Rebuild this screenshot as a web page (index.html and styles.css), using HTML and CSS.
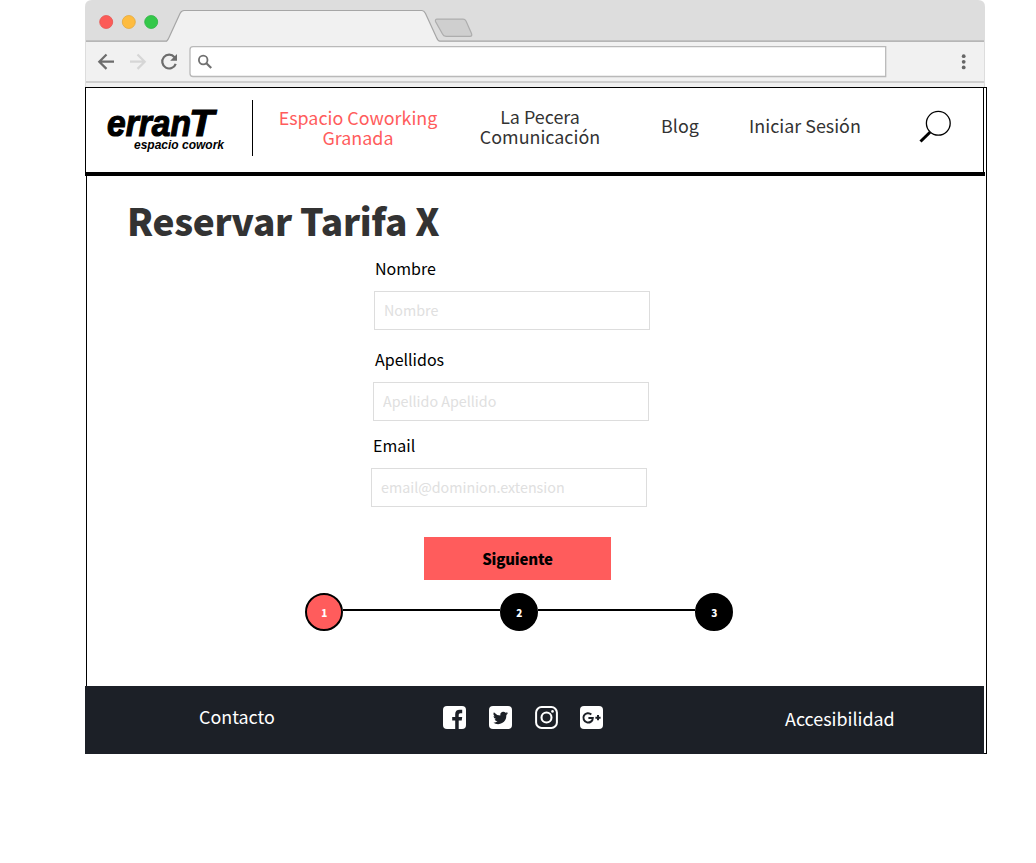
FILE: index.html
```html
<!DOCTYPE html>
<html lang="es">
<head>
<meta charset="utf-8">
<title>Reservar Tarifa X</title>
<link rel="stylesheet" href="styles.css">
</head>
<body>
<div class="window">
  <svg class="chrome" width="900" height="87" viewBox="0 0 900 87">
    <path d="M0 87V7Q0 0 7 0H893Q900 0 900 7V87Z" fill="#ddd"/>
    <path d="M1 41.500H82L96.500 10.500H339L353.500 41.500H899V87H1Z" fill="#f1f1f1"/>
    <path d="M1 41.200H81.500Q83 40 84 37.500L95 13.500Q96.500 10.500 99 10.500H337Q339 10.500 340.500 13.500L351.500 37.500Q353 41.200 355 41.200H899" fill="none" stroke="#a6a6a6" stroke-width="1.200"/>
    <path d="M352 19.200H378Q380 19.200 381 21L386.500 33.500Q387.500 36.300 385 36.300H361Q358.500 36.300 357.500 34L350.500 21.500Q350 19.200 352 19.200Z" fill="#cfcfcf" stroke="#adadad" stroke-width="1.200"/>
    <circle cx="21.200" cy="22" r="6.500" fill="#fc5b57" stroke="#e65450" stroke-width=".8"/>
    <circle cx="43.800" cy="22" r="6.500" fill="#febc40" stroke="#e3a83b" stroke-width=".8"/>
    <circle cx="66.200" cy="22" r="6.500" fill="#34c84a" stroke="#2fb344" stroke-width=".8"/>
    <g fill="none" stroke-width="2.200">
      <path d="M29 61.700H14.500M21.500 54.500L14.300 61.700L21.500 68.900" stroke="#6c6c6c"/>
      <path d="M45 61.700H59.500M52.500 54.500L59.700 61.700L52.500 68.900" stroke="#d6d6d6"/>
      <path d="M89.500 57.200A6.900 6.900 0 1 0 90.700 63.800" stroke="#6c6c6c"/>
    </g>
    <path d="M92 54V60.800H85.200Z" fill="#6c6c6c"/>
    <path d="M108 46.700H800.700V76.500H108Q105 76.500 105 73.500V49.700Q105 46.700 108 46.700Z" fill="#fff" stroke="#b9b9b9" stroke-width="1.300"/>
    <g fill="none" stroke="#707070"><circle cx="118.200" cy="60" r="4.300" stroke-width="1.800"/><path d="M121.400 63.200L126.200 68" stroke-width="2.200"/></g>
    <g fill="#666"><circle cx="878.700" cy="56.200" r="1.900"/><circle cx="878.700" cy="61.800" r="1.900"/><circle cx="878.700" cy="67.400" r="1.900"/></g>
    <path d="M1 82H899" stroke="#cfcfcf" stroke-width="2"/>
  </svg>
  <div class="page">
    <header class="header">
      <svg class="logo" width="130" height="60" viewBox="0 0 130 60">
        <g class="logo-text">
          <text x="2" y="37" font-size="37" textLength="84" lengthAdjust="spacingAndGlyphs" stroke="#000" stroke-width="1.200">erran</text>
          <text x="84" y="37" font-size="36" textLength="25" lengthAdjust="spacingAndGlyphs" stroke="#000" stroke-width="1">T</text>
          <text x="29" y="49.500" font-size="13.500" textLength="90" lengthAdjust="spacingAndGlyphs">espacio cowork</text>
        </g>
      </svg>
      <span class="divider"></span>
      <a class="nav active">Espacio Coworking<br>Granada</a>
      <a class="nav">La Pecera<br>Comunicación</a>
      <a class="nav single">Blog</a>
      <a class="nav single">Iniciar Sesión</a>
      <svg class="search" width="34" height="34" viewBox="0 0 34 34" fill="none" stroke="#000">
        <circle cx="20.300" cy="13.300" r="11.900" stroke-width="1.300"/><path d="M12 22.200L2.500 31.500" stroke-width="3"/>
      </svg>
    </header>
    <div class="rule"></div>
    <main class="main">
      <h1 class="title">Reservar Tarifa X</h1>
      <form class="form">
        <div class="field first"><label class="label" for="nombre">Nombre</label><input class="input" id="nombre" placeholder="Nombre"></div>
        <div class="field second"><label class="label" for="apellidos">Apellidos</label><input class="input" id="apellidos" placeholder="Apellido Apellido"></div>
        <div class="field third"><label class="label" for="email">Email</label><input class="input" id="email" placeholder="email@dominion.extension"></div>
        <button class="next" type="button">Siguiente</button>
      </form>
      <div class="steps">
        <span class="step current">1</span><span class="line"></span><span class="step">2</span><span class="line"></span><span class="step">3</span>
      </div>
    </main>
    <footer class="footer">
      <a class="foot-link contact">Contacto</a>
      <div class="social">
        <svg width="23" height="23" viewBox="0 0 23 23"><rect width="23" height="23" rx="4" fill="#fff"/><path d="M12.200 23V14.400H9.200V11H12.200V8.200Q12.200 3.800 16.800 3.800H19.200V7.200H17.300Q15.700 7.200 15.700 8.800V11H19.200L18.700 14.400H15.700V23Z" fill="#1c2027"/></svg>
        <svg width="23" height="23" viewBox="0 0 23 23"><rect width="23" height="23" rx="4" fill="#fff"/><path d="M19 7.100Q18.200 7.500 17.300 7.600Q18.200 7 18.600 5.900Q17.700 6.400 16.600 6.700A3.100 3.100 0 0 0 11.300 9.500Q7.400 9.300 4.900 6.200Q3.600 8.700 5.900 10.400Q5.200 10.400 4.500 10Q4.500 12.400 7 13.100Q6.300 13.300 5.600 13.200Q6.200 15.200 8.500 15.300Q6.500 16.900 4 16.600Q8.700 19.400 13.100 17.100Q17.400 14.700 17.400 9Q18.500 8.200 19 7.100Z" fill="#1c2027"/></svg>
        <svg width="23" height="23" viewBox="0 0 23 23" fill="none" stroke="#fff"><rect x="1.100" y="1.100" width="20.800" height="20.800" rx="5.500" stroke-width="2"/><circle cx="11.500" cy="11.500" r="5" stroke-width="2.100"/><circle cx="17.500" cy="5.400" r="1.300" fill="#fff" stroke="none"/></svg>
        <svg class="gplus" width="23" height="23" viewBox="0 0 23 23"><rect width="23" height="23" rx="4" fill="#fff"/><path d="M11.300 8.400A4.700 4.700 0 1 0 12.800 11.900H8.400M15.400 11.700H20.600M18 9.100V14.300" fill="none" stroke="#1c2027" stroke-width="2"/></svg>
      </div>
      <a class="foot-link access">Accesibilidad</a>
    </footer>
  </div>
</div>
</body>
</html>
```

FILE: styles.css
```css
* { box-sizing: border-box; }
body { margin: 0; background: #fff; color: #000; font-family: "Noto Sans CJK SC", "Noto Sans", sans-serif; }
.window { width: 902px; margin-left: 85px; }
.chrome { display: block; }
.page { display: flex; flex-direction: column; width: 901px; height: 667px; margin-left: 1px; border: 1px solid #000; }
.header { display: grid; grid-template-columns: 166px 1px 210px 154px 126px 124px 1fr; align-items: center; flex: none; width: 899px; height: 86px; margin: -1px 0 0 -2px; border: 1px solid #000; background: #fff; }
.logo { margin: -3px 0 0 19px; }
.logo-text { font-family: "Liberation Sans", Arial, sans-serif; font-weight: bold; font-style: italic; }
.divider { height: 56px; margin-top: -5px; background: #000; }
.nav { color: #333; font-size: 17.9px; line-height: 20px; text-align: center; white-space: nowrap; margin-top: -8px; }
.nav.active { color: #ff5c5c; margin-top: -6px; }
.nav.single { margin-top: -10px; }
.search { margin: -6px 0 0 51px; }
.rule { flex: none; width: 900px; height: 4px; margin: -1px 0 0 -2px; background: #000; }
.main { flex: 1; }
.title { margin: 14px 0 0 40px; color: #333; font-size: 37px; line-height: 60px; font-weight: 900; letter-spacing: -.3px; }
.form { display: flex; flex-direction: column; }
.field { display: flex; flex-direction: column; width: 276px; }
.first { margin: 6px 0 0 287px; }
.second { margin: 17px 0 0 286px; }
.third { margin: 12px 0 0 284px; }
.label { height: 35px; padding-left: 2px; font-size: 16px; line-height: 24px; }
.first .label { padding-left: 1px; }
.input { height: 39px; padding: 0 9px 2px; border: 1px solid #ddd; border-radius: 0; outline: 0; background: #fff; font-family: inherit; font-size: 14.3px; }
.input::placeholder { color: #e0e0e0; opacity: 1; }
.next { width: 187px; height: 43px; margin: 30px 0 0 337px; padding: 0; border: 0; background: #ff5c5c; color: #000; font-family: inherit; font-size: 15px; font-weight: 900; letter-spacing: -.2px; }
.steps { display: flex; align-items: center; margin: 13px 0 0 218.4px; }
.step { display: flex; align-items: center; justify-content: center; width: 38px; height: 38px; border: 2px solid #000; border-radius: 50%; background: #000; color: #fff; font-size: 10px; font-weight: 900; }
.step.current { background: #ff5c5c; }
.line { width: 157px; height: 2px; margin-top: -4px; background: #000; }
.footer { display: flex; flex: none; width: 899px; height: 68px; margin: 0 0 -1px -2px; background: #1c2027; }
.foot-link { color: #fff; font-size: 17.9px; line-height: 26px; white-space: nowrap; }
.contact { width: 244px; margin: 17px 0 0 114px; }
.social { display: flex; gap: 23px; width: 342px; padding-top: 20px; }
.gplus { margin-left: -1px; }
.access { margin-top: 19px; }
```
